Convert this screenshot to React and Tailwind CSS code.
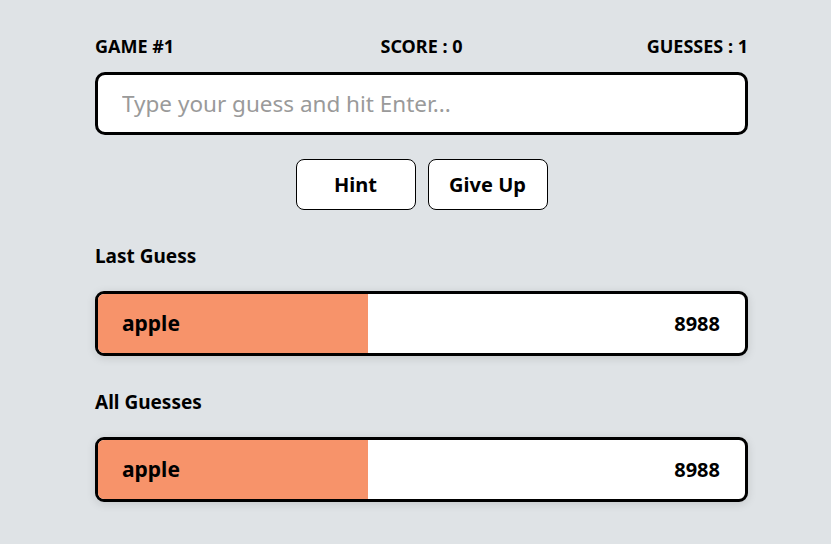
import React, { useState } from 'react';

const font = { fontFamily: '"Noto Sans", "Open Sans", sans-serif' };

const GuessRow = ({ word, rank, pct }) => (
  <div className="relative h-[65px] rounded-[9px] border-[3px] border-black bg-white overflow-hidden shadow-[0_2px_10px_rgba(0,0,0,0.12)]">
    <div className="absolute inset-y-0 left-0 bg-[#f7936a]" style={{ width: `${pct}%` }} />
    <div className="relative flex h-full items-center justify-between pl-[24px] pr-[25px]">
      <span className="text-[21px] font-bold text-black">{word}</span>
      <span className="text-[20px] font-bold text-black">{rank}</span>
    </div>
  </div>
);

export default function App() {
  const [guess, setGuess] = useState('');
  const guesses = [{ word: 'apple', rank: 8988, pct: 41.8 }];

  return (
    <div className="min-h-screen bg-[#dfe3e6] text-black" style={font}>
      <div className="ml-[95px] w-[653px] pt-[34px]">
        <div className="grid grid-cols-3 items-center text-[18px] font-bold leading-[24px]">
          <span>GAME #1</span>
          <span className="text-center">SCORE : 0</span>
          <span className="text-right">GUESSES : 1</span>
        </div>

        <input
          value={guess}
          onChange={(e) => setGuess(e.target.value)}
          autoFocus
          placeholder="Type your guess and hit Enter..."
          className="mt-[14px] block h-[63px] w-full rounded-[10px] border-[3px] border-black bg-white px-[24px] text-[22.5px] outline-none placeholder:text-[#9a9a9a]"
        />

        <div className="mt-[24px] flex justify-center gap-[12px]">
          <button className="h-[51px] w-[120px] rounded-[8px] border border-black bg-white text-[20px] font-bold">Hint</button>
          <button className="h-[51px] w-[120px] rounded-[8px] border border-black bg-white text-[20px] font-bold">Give Up</button>
        </div>

        <h3 className="mt-[34px] text-[19px] font-bold leading-[24px]">Last Guess</h3>
        <div className="mt-[23px]">
          <GuessRow {...guesses[0]} />
        </div>

        <h3 className="mt-[34px] text-[19px] font-bold leading-[24px]">All Guesses</h3>
        <div className="mt-[23px] flex flex-col gap-[12px]">
          {guesses.map((g) => (
            <GuessRow key={g.word} {...g} />
          ))}
        </div>
      </div>
    </div>
  );
}
